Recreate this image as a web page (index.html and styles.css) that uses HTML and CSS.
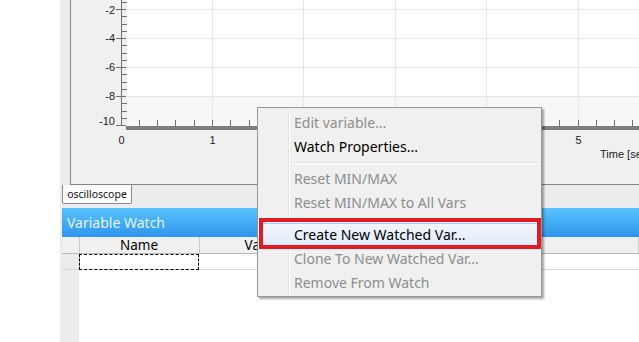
FILE: index.html
```html
<!DOCTYPE html>
<html lang="en">
<head>
    <meta charset="UTF-8">
    <title>Variable Watch</title>
    <link rel="stylesheet" href="styles.css">
</head>
<body>
    <div class="app">
        <div class="margin"></div>
        <div class="win">
            <!-- oscilloscope plot -->
            <div class="scope-pane">
                <svg class="plot" width="568" height="184" viewBox="0 0 568 184">
                    <rect x="56" y="0" width="512" height="126" fill="#ffffff"/>
                    <rect x="56" y="97" width="512" height="29" fill="#f7f7f7"/>
                    <g stroke="#e6e6e6" stroke-width="1">
                        <path d="M56 9.5H568M56 38.5H568M56 67.5H568M56 96.5H568"/>
                        <path d="M141.5 0V126M232.5 0V126M324.5 0V126M415.5 0V126M507.5 0V126"/>
                    </g>
                    <g stroke="#707070" stroke-width="1">
                        <path d="M50.5 0V126"/>
                        <path d="M45 9.5H55M45 38.5H55M45 67.5H55M45 96.5H55M45 125.5H55"/>
                        <path d="M50 2.5H56M50 16.5H56M50 24.5H56M50 31.5H56M50 45.5H56M50 53.5H56M50 60.5H56M50 74.5H56M50 82.5H56M50 89.5H56M50 103.5H56M50 111.5H56M50 118.5H56"/>
                        <path d="M68.5 120V126M86.5 120V126M104.5 120V126M123.5 120V126M141.5 120V126M159.5 120V126M178.5 120V126M196.5 120V126M214.5 120V126M232.5 120V126M251.5 120V126M269.5 120V126M287.5 120V126M305.5 120V126M324.5 120V126M342.5 120V126M360.5 120V126M379.5 120V126M397.5 120V126M415.5 120V126M433.5 120V126M452.5 120V126M470.5 120V126M488.5 120V126M507.5 120V126M525.5 120V126M543.5 120V126M561.5 120V126"/>
                    </g>
                    <rect x="55" y="126" width="513" height="4" fill="#7d7d7d"/>
                    <g class="axis-text" text-anchor="end">
                        <text x="44" y="14">-2</text>
                        <text x="44" y="42">-4</text>
                        <text x="44" y="71">-6</text>
                        <text x="44" y="100">-8</text>
                        <text x="44" y="125">-10</text>
                    </g>
                    <g class="axis-text" text-anchor="middle">
                        <text x="50.5" y="144">0</text>
                        <text x="141.5" y="144">1</text>
                        <text x="507.5" y="144">5</text>
                    </g>
                    <text class="axis-text" x="529" y="158">Time [sec]</text>
                </svg>
            </div>

            <div class="tabs">
                <div class="tab">oscilloscope</div>
            </div>

            <!-- watch dock -->
            <section class="dock">
                <header class="dock-title">Variable Watch</header>
                <table class="watch">
                    <colgroup>
                        <col class="c-corner">
                        <col class="c-name">
                        <col class="c-value">
                        <col>
                    </colgroup>
                    <thead>
                        <tr><th></th><th>Name</th><th>Value</th><th></th></tr>
                    </thead>
                    <tbody>
                        <tr><td class="rowhead"></td><td class="focus"></td><td></td><td></td></tr>
                    </tbody>
                </table>
            </section>
        </div>

        <!-- context menu -->
        <div class="menu">
            <div class="menu-item off">Edit variable...</div>
            <div class="menu-item">Watch Properties...</div>
            <div class="menu-sep"></div>
            <div class="menu-item off">Reset MIN/MAX</div>
            <div class="menu-item off">Reset MIN/MAX to All Vars</div>
            <div class="menu-sep"></div>
            <div class="menu-item hot">Create New Watched Var...</div>
            <div class="menu-item off">Clone To New Watched Var...</div>
            <div class="menu-item off">Remove From Watch</div>
            <div class="callout"></div>
        </div>
    </div>
</body>
</html>
```

FILE: styles.css
```css
body {
    margin: 0;
    background: #fff;
    font-family: "Noto Sans", "DejaVu Sans", sans-serif;
}
.app {
    position: relative;
    width: 639px;
    height: 342px;
    overflow: hidden;
    display: flex;
}
.margin {
    width: 60px;
    flex: none;
    background: #fff;
}
.win {
    flex: 1;
    min-width: 0;
    display: flex;
    flex-direction: column;
    padding-left: 2px;
    background: #ececec;
}
.scope-pane {
    flex: none;
    height: 184px;
    margin-left: 8px;
    border-left: 1px solid #858585;
    border-bottom: 1px solid #858585;
    background: #f0f0f0;
    overflow: hidden;
}
.plot {
    display: block;
}
.axis-text {
    font-family: "Liberation Sans", Arial, sans-serif;
    font-size: 11px;
    fill: #222;
}
.tabs {
    flex: none;
    height: 23px;
    display: flex;
}
.tab {
    box-sizing: border-box;
    width: 70px;
    height: 19px;
    border: 1px solid #898989;
    border-top: none;
    border-radius: 0 0 2px 2px;
    background: #fcfcfc;
    font-size: 10.5px;
    line-height: 18px;
    text-align: center;
    color: #111;
}
.dock {
    flex: 1;
    display: flex;
    flex-direction: column;
    background: linear-gradient(to right, #ececec 17px, #fff 17px);
}
.dock-title {
    flex: none;
    height: 29px;
    padding-left: 5px;
    background: linear-gradient(#58c3fe, #2f94ec);
    color: #e8f5ff;
    font-size: 14px;
    line-height: 29px;
}
.watch {
    width: 100%;
    table-layout: fixed;
    border-collapse: collapse;
    font-size: 13.5px;
}
.c-corner { width: 17px; }
.c-name { width: 120px; }
.c-value { width: 126px; }
.watch th {
    height: 16px;
    padding: 0;
    background: #f0f0f0;
    font-weight: normal;
    line-height: 15px;
    color: #000;
    border-right: 1px solid #cbcbcb;
    border-bottom: 1px solid #b9b9b9;
}
.watch td {
    height: 15px;
    padding: 0;
    background: #fff;
    border-bottom: 1px solid #d6d6d6;
}
.watch td.rowhead {
    background: #ececec;
    border-right: 1px solid #cbcbcb;
}
.watch td.focus {
    outline: 1px dashed #000;
    outline-offset: -1px;
}
.menu {
    position: absolute;
    left: 257px;
    top: 107px;
    box-sizing: border-box;
    width: 285px;
    height: 190px;
    padding: 3px 0 2px;
    border: 1px solid #979797;
    background:
        linear-gradient(to right, transparent 30px, #e2e3e3 30px, #e2e3e3 31px, #fff 31px, #fff 32px, transparent 32px),
        #f0f0f0;
    box-shadow: 2px 2px 2px rgba(0, 0, 0, 0.35);
}
.menu-item {
    height: 24px;
    padding-left: 36px;
    font-size: 14px;
    line-height: 24px;
    color: #000;
    white-space: nowrap;
}
.menu-item.off {
    color: #8d8d8d;
}
.menu-item.hot {
    box-sizing: border-box;
    margin: 0 2px;
    padding-left: 33px;
    line-height: 22px;
    border: 1px solid #aecff7;
    border-radius: 3px;
    background: linear-gradient(#f2f7fe, #e0eaf8);
}
.menu-sep {
    height: 8px;
    margin: 0 1px 0 32px;
    background: linear-gradient(transparent 3px, #e0e0e0 3px, #e0e0e0 4px, #fff 4px, #fff 5px, transparent 5px);
}
.callout {
    position: absolute;
    left: 1px;
    top: 110px;
    box-sizing: border-box;
    width: 282px;
    height: 31px;
    border: 4px solid #e01b24;
}
```
